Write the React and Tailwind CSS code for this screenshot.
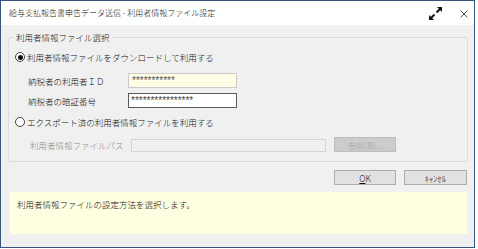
import React from 'react';

const jp = { fontFamily: '"Noto Sans CJK JP", "Noto Sans", sans-serif' };

const Radio = ({ checked }) => (
  <span className="w-[10px] h-[10px] rounded-full border border-[#444] bg-white flex items-center justify-center shrink-0">
    {checked && <span className="w-[5px] h-[5px] rounded-full bg-[#111]" />}
  </span>
);

const ExpandIcon = () => (
  <svg width="15" height="15" viewBox="0 0 15 15">
    <path d="M8.5 6.5 L12 3" stroke="#111" strokeWidth="2" />
    <path d="M9 1 L14 1 L14 6 Z" fill="#111" />
    <path d="M6.5 8.5 L3 12" stroke="#111" strokeWidth="2" />
    <path d="M1 9 L1 14 L6 14 Z" fill="#111" />
  </svg>
);

const CloseIcon = () => (
  <svg width="8" height="8" viewBox="0 0 8 8">
    <path d="M0.5 0.5 L7.5 7.5 M7.5 0.5 L0.5 7.5" stroke="#555" strokeWidth="1" />
  </svg>
);

const App = () => {
  return (
    <div className="w-[478px] h-[249px] bg-white text-[8.5px] leading-[12px] font-light text-[#111]" style={jp}>
      <div className="w-[475px] h-[248px] border border-[#35557a] flex flex-col">
        {/* title bar */}
        <div className="h-[24px] bg-white flex items-center pl-[8px] pr-[6px] shrink-0">
          <span className="text-[8px]">給与支払報告書申告データ送信 - 利用者情報ファイル設定</span>
          <span className="ml-auto mr-[17px] flex"><ExpandIcon /></span>
          <span className="flex mt-[2px]"><CloseIcon /></span>
        </div>

        <div className="flex-1 bg-[#f0f0f0] flex flex-col">
          {/* group box */}
          <div className="ml-[7px] mr-[6px] mt-[12px] h-[125px] border border-[#dcdcdc] rounded-[2px] flex flex-col">
            <div className="-mt-[7px] ml-[5px] px-[2px] bg-[#f0f0f0] w-fit">利用者情報ファイル選択</div>

            <div className="mt-[8px] ml-[6px] flex items-center gap-[2px]">
              <Radio checked />
              <span>利用者情報ファイルをダウンロードして利用する</span>
            </div>

            <div className="mt-[10px] flex items-center">
              <span className="ml-[19px] w-[100px]">納税者の利用者ＩＤ</span>
              <div className="w-[109px] h-[15px] bg-[#fffde6] border border-[#cacaca] flex items-center pl-[3px] text-[10px] text-[#555]" style={{ fontFamily: '"Liberation Sans", sans-serif' }}>
                ***********
              </div>
            </div>

            <div className="mt-[5px] flex items-center">
              <span className="ml-[19px] w-[100px]">納税者の暗証番号</span>
              <div className="w-[109px] h-[15px] bg-white border border-[#5a5a5a] flex items-center pl-[2px] text-[10px] text-[#444]" style={{ fontFamily: '"Liberation Sans", sans-serif' }}>
                ****************
              </div>
            </div>

            <div className="mt-[8px] ml-[6px] flex items-center gap-[2px]">
              <Radio />
              <span>エクスポート済の利用者情報ファイルを利用する</span>
            </div>

            <div className="mt-[9px] flex items-center">
              <span className="ml-[21px] w-[101px] text-[#8c8c8c]">利用者情報ファイルパス</span>
              <div className="w-[195px] h-[13px] mt-[2px] bg-[#f0f0f0] border border-[#d4d4d4]" />
              <div className="ml-[8px] w-[62px] h-[15px] bg-[#cccccc] border border-[#bdbdbd] flex items-center justify-center text-[#a3a3a3]">
                参照(B)...
              </div>
            </div>
          </div>

          {/* buttons */}
          <div className="mt-[8px] mr-[7px] flex justify-end gap-[8px]">
            <div className="w-[62px] h-[15px] bg-[#e1e1e1] border border-[#adadad] flex items-center justify-center">
              <span><span className="underline">O</span>K</span>
            </div>
            <div className="w-[63px] h-[15px] bg-[#e1e1e1] border border-[#adadad] flex items-center justify-center">
              ｷｬﾝｾﾙ
            </div>
          </div>

          {/* status */}
          <div className="mt-[7px] ml-[9px] mr-[7px] h-[42px] bg-[#fffee0] pl-[7px] pt-[6px]">
            利用者情報ファイルの設定方法を選択します。
          </div>
        </div>
      </div>
    </div>
  );
};

export default App;
